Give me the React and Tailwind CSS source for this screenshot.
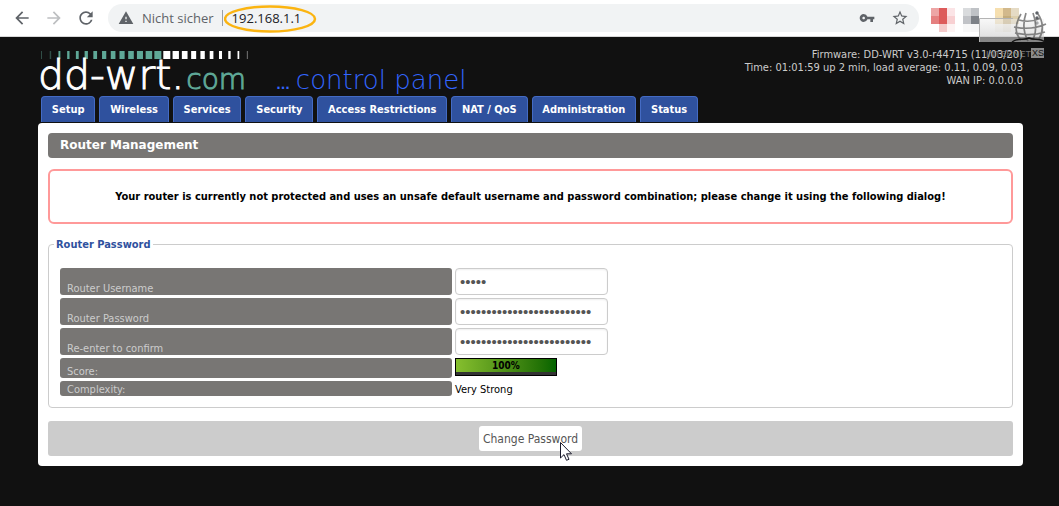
import React from 'react'
import { MdArrowBack, MdArrowForward, MdRefresh, MdWarning, MdVpnKey, MdStarBorder, MdMoreVert } from 'react-icons/md'

const tabs = ['Setup', 'Wireless', 'Services', 'Security', 'Access Restrictions', 'NAT / QoS', 'Administration', 'Status']

// Bars grow towards the middle of the logo, green on the left and white on the right
const bars = Array.from({ length: 24 }, (_, i) => {
  const width = i < 14 ? 1 + i * 0.46 : 7 - (i - 14) * 0.66
  return { x: 1.5 + i * 8.95 - width / 2, width, color: i < 14 ? '#5fa897' : '#ffffff', faded: i < 2 || i > 22 }
})

const redPixels = ['bg-[#eda5a5]', 'bg-[#dd5b5b]', 'bg-[#fbe4e6]', 'bg-[#e58080]', 'bg-[#dd5b5b]', 'bg-[#f8d0d2]', 'bg-white', 'bg-[#f4caca]', 'bg-[#fdf3f3]']
const grayPixels = ['bg-[#d9dbdd]', 'bg-[#bfc2c6]', 'bg-[#c1c3c7]', 'bg-[#7d8187]', 'bg-[#f8f8f8]', 'bg-[#f6f6f6]']
const goldPixels = ['bg-[#f6dfaf]', 'bg-[#d2b98c]', 'bg-[#e5dbc5]', 'bg-[#eedcb4]', 'bg-[#c4ad7c]', 'bg-[#dccfae]', 'bg-[#f8f6f0]', 'bg-[#f0ece2]', 'bg-[#f8f8f6]']

function PixelIcon({ colors, className }) {
  return (
    <div className={`grid auto-rows-[8px] ${className}`}>
      {colors.map((c, i) => <span key={i} className={c} />)}
    </div>
  )
}

function BrowserBar() {
  return (
    <div className="h-[37px] bg-white border-b border-[#d8d8d8] flex items-center text-[#5f6368] font-['Open_Sans',sans-serif] text-[13px]">
      <div className="flex items-center gap-3 pl-3 pr-3">
        <button type="button" aria-label="Back"><MdArrowBack size={20} /></button>
        <button type="button" aria-label="Forward" className="text-[#bdbfc1]"><MdArrowForward size={20} /></button>
        <button type="button" aria-label="Reload"><MdRefresh size={20} /></button>
      </div>
      <div className="flex-1 h-7 rounded-full bg-[#f1f3f4] flex items-center pl-2.5 pr-2.5">
        <MdWarning size={16} />
        <span className="ml-2">Nicht sicher</span>
        <span className="w-px h-4 bg-[#9aa0a6] ml-2" />
        <div className="relative ml-[9px] flex-1">
          <input aria-label="Address" defaultValue="192.168.1.1" className="w-full bg-transparent text-[#202124] outline-none" />
          <svg className="absolute -left-2 -top-1 w-[94px] h-[28px]" viewBox="0 0 94 28" fill="none">
            <ellipse cx="46" cy="14" rx="45" ry="12.5" stroke="#fbb410" strokeWidth="2.5" />
          </svg>
        </div>
        <MdVpnKey size={16} />
        <button type="button" aria-label="Bookmark" className="ml-4"><MdStarBorder size={18} /></button>
      </div>
      <div className="flex items-center pl-3 pt-1">
        <PixelIcon colors={redPixels} className="grid-cols-[8px_8px_8px]" />
        <PixelIcon colors={grayPixels} className="grid-cols-[8px_8px] ml-2" />
        <PixelIcon colors={goldPixels} className="grid-cols-[8px_8px_8px] ml-4" />
      </div>
      <button type="button" aria-label="Menu" className="ml-2 mr-3"><MdMoreVert size={20} /></button>
    </div>
  )
}

function Watermark() {
  return (
    <svg className="absolute right-3 top-3 w-[68px] h-[48px]" viewBox="0 0 68 48" fill="none">
      <defs>
        <linearGradient id="plate" x1="0" x2="0" y1="0" y2="1">
          <stop offset="0" stopColor="#f0f0f0" stopOpacity="0.5" />
          <stop offset="1" stopColor="#c4c4c4" stopOpacity="0.65" />
        </linearGradient>
      </defs>
      <path d="M0 7h65v23H0z" fill="url(#plate)" />
      <path d="M0.500 30V6.500H34" stroke="#b4b4b4" />
      <g stroke="#555555" strokeOpacity="0.7" strokeWidth="1.700">
        <path d="M42 28C35 21 36 12 42 2M49 29C44 20 44 10 47 1M54 28C58 19 57 9 54 1M60 27C65 19 64 9 59 2M40 8C47 10 54 10 62 6M35 15C45 17 56 17 67 12M36 21C45 23 57 23 66 20" />
      </g>
      <path d="M33 30C40 25 45 29 50 26C55 29 60 25 66 30" stroke="#151515" strokeWidth="1.500" />
      <text x="7" y="45" fontFamily="Liberation Sans, sans-serif" fontSize="9" fill="#8a8a8a" fillOpacity="0.85">INTERNET</text>
      <rect x="52" y="36" width="13" height="10" fill="#8a8a8a" />
      <text x="53" y="44" fontFamily="Liberation Sans, sans-serif" fontSize="9" fill="#111111">XS</text>
    </svg>
  )
}

function Logo() {
  return (
    <div className="pt-[14px] pl-0.5 font-['DejaVu_Sans',sans-serif] font-extralight">
      <svg className="w-[212px] h-2 block" viewBox="0 0 212 8">
        {bars.map((b, i) => (
          <rect key={i} x={b.x} y="0" width={b.width} height="8" fill={b.color} opacity={b.faded ? 0.4 : 1} />
        ))}
      </svg>
      <div className="flex items-baseline leading-8 whitespace-nowrap">
        <span className="text-[41px] -ml-0.5 text-white [-webkit-text-stroke:1px_#ffffff]">dd-wrt.</span>
        <span className="text-[28px] ml-0.5 text-[#5fa897] [-webkit-text-stroke:1px_#5fa897]">com</span>
        <span className="text-xs text-[#3366ff] ml-[30px] font-bold">...</span>
        <span className="text-[26px] text-[#3366ff] ml-1.5">control panel</span>
      </div>
    </div>
  )
}

function Row({ label, id, height, children }) {
  return (
    <div className={`flex gap-[3px] ${height}`}>
      <label htmlFor={id} className="w-[392px] shrink bg-[#787674] text-[#cccccc] rounded-[3px] pl-[7px] flex items-end">{label}</label>
      {children}
    </div>
  )
}

function PasswordField({ id, length }) {
  return (
    <input
      id={id}
      type="password"
      defaultValue={'x'.repeat(length)}
      className="w-[153px] border border-[#cccccc] rounded-[4px] px-1 font-['Liberation_Sans',sans-serif] text-[15px] text-[#555555] shadow-[inset_0_1px_2px_#eeeeee] outline-none"
    />
  )
}

export default function App() {
  return (
    <div className="relative min-h-screen bg-[#111111] overflow-hidden font-['DejaVu_Sans_Condensed','DejaVu_Sans',sans-serif] text-[11px] leading-[13px]">
      <BrowserBar />
      <div className="ml-[38px] mr-9">
        <header className="flex justify-between h-[59px]">
          <Logo />
          <div className="pt-[11px] text-right text-[#cccccc]">
            <p>Firmware: DD-WRT v3.0-r44715 (11/03/20)</p>
            <p>Time: 01:01:59 up 2 min, load average: 0.11, 0.09, 0.03</p>
            <p>WAN IP: 0.0.0.0</p>
          </div>
        </header>

        <nav className="flex gap-1 pl-[3px] max-w-[660px]">
          {tabs.map((tab) => (
            <a key={tab} href="#" className="flex-auto h-[26px] px-2 border border-b-0 border-[#446bc4] bg-[#2f519e] rounded-t-[4px] text-white text-center font-bold leading-[25px] whitespace-nowrap">
              {tab}
            </a>
          ))}
        </nav>

        <main className="mt-px bg-white rounded-[4px] p-[10px]">
          <h2 className="h-[25px] rounded-[4px] bg-[#787674] pl-3 text-white font-['DejaVu_Sans',sans-serif] text-xs font-bold leading-[25px]">Router Management</h2>

          <div className="mt-[11px] h-[55px] border-2 border-[#ff9999] rounded-[6px] flex items-center justify-center font-bold text-black">
            Your router is currently not protected and uses an unsafe default username and password combination; please change it using the following dialog!
          </div>

          <form>
            <fieldset className="mt-[14px] border border-[#cccccc] rounded-[4px] px-[11px] pb-[11px]">
              <legend className="-ml-[6px] px-[2px] font-bold text-[#2f519e]">Router Password</legend>
              <div className="pt-[17px] flex flex-col gap-[3px]">
                <Row label="Router Username" id="username" height="h-[27px]"><PasswordField id="username" length={5} /></Row>
                <Row label="Router Password" id="password" height="h-[27px]"><PasswordField id="password" length={25} /></Row>
                <Row label="Re-enter to confirm" id="confirm" height="h-[27px]"><PasswordField id="confirm" length={25} /></Row>
                <Row label="Score:" id="score" height="h-5">
                  <output id="score" className="w-[102px] h-[18px] border border-black bg-[#333333] text-center text-[10px] font-bold text-black">
                    <span className="block bg-linear-to-r from-[#86bf2e] to-[#006400]">100%</span>
                  </output>
                </Row>
                <Row label="Complexity:" id="complexity" height="h-[15px]">
                  <output id="complexity" className="text-black pt-0.5">Very Strong</output>
                </Row>
              </div>
            </fieldset>

            <div className="mt-[13px] h-[35px] rounded-[3px] bg-[#cccccc] flex items-center justify-center">
              <div className="relative">
                <button type="button" className="h-[25px] px-1 rounded-[3px] bg-white text-xs text-[#555555]">Change Password</button>
                <svg className="absolute left-[81px] top-4 w-3 h-[19px]" viewBox="0 0 12 19">
                  <path d="M.5.500V16l3.500-3.400L6.500 18.300l2.500-1-2.500-5.500h5z" fill="#fff" stroke="#1c1c2e" />
                </svg>
              </div>
            </div>
          </form>
        </main>
      </div>
      <Watermark />
    </div>
  )
}
